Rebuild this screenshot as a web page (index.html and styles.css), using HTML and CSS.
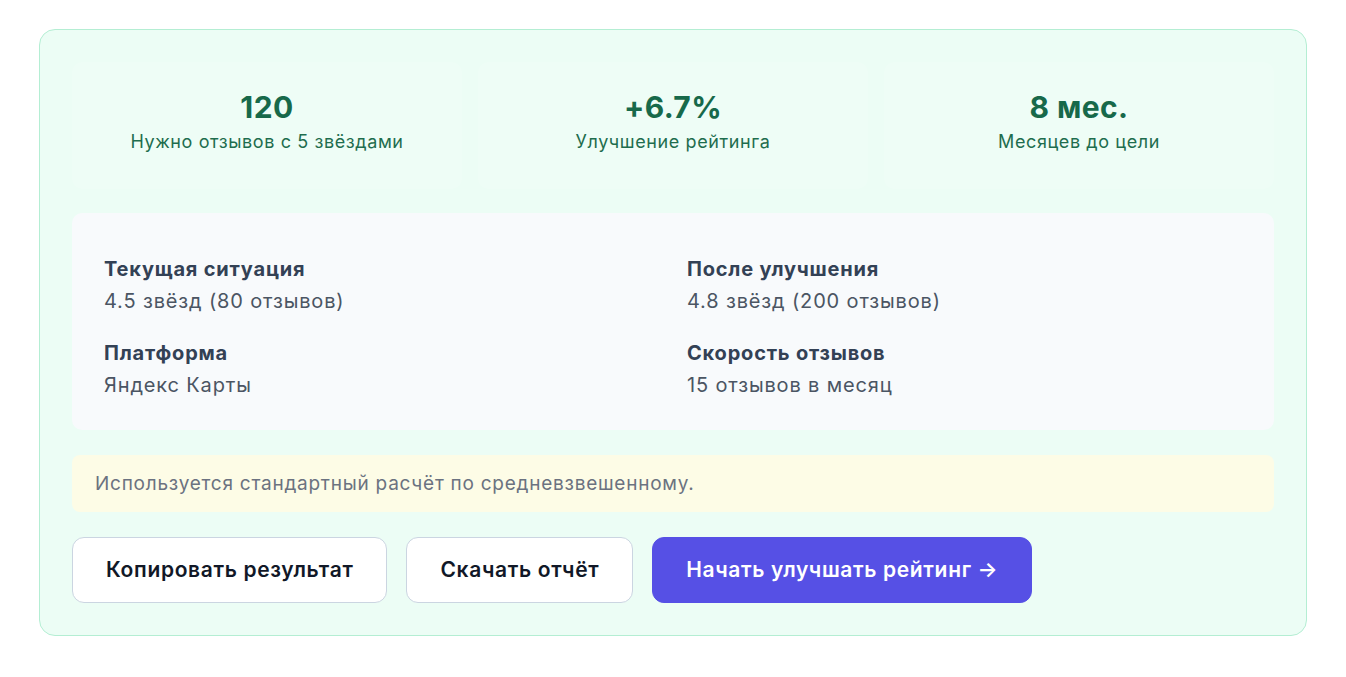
FILE: index.html
```html
<!DOCTYPE html>
<html lang="ru">
<head>
  <meta charset="UTF-8" />
  <meta name="viewport" content="width=device-width, initial-scale=1.0" />
  <title>Калькулятор рейтинга</title>
  <link rel="stylesheet" href="styles.css">
</head>
<body>

  <div class="page">
    <section class="result">
      <div class="stats">
        <div class="stat">
          <div class="stat-value">120</div>
          <div class="stat-label">Нужно отзывов с 5 звёздами</div>
        </div>
        <div class="stat">
          <div class="stat-value">+6.7%</div>
          <div class="stat-label">Улучшение рейтинга</div>
        </div>
        <div class="stat">
          <div class="stat-value">8 мес.</div>
          <div class="stat-label">Месяцев до цели</div>
        </div>
      </div>

      <div class="details">
        <div class="detail">
          <h4>Текущая ситуация</h4>
          <p>4.5 звёзд (80 отзывов)</p>
        </div>
        <div class="detail">
          <h4>После улучшения</h4>
          <p>4.8 звёзд (200 отзывов)</p>
        </div>
        <div class="detail">
          <h4>Платформа</h4>
          <p>Яндекс Карты</p>
        </div>
        <div class="detail">
          <h4>Скорость отзывов</h4>
          <p>15 отзывов в месяц</p>
        </div>
      </div>

      <div class="note">Используется стандартный расчёт по средневзвешенному.</div>

      <div class="actions">
        <button class="btn">Копировать результат</button>
        <button class="btn">Скачать отчёт</button>
        <button class="btn btn-primary">Начать улучшать рейтинг →</button>
      </div>
    </section>
  </div>

</body>
</html>
```

FILE: styles.css
```css
body { margin: 0; font-family: Inter, "Noto Sans", sans-serif; background: white; }
.page { padding: 29px 39px; }

.result {
  background: #ecfdf5;
  border: 1px solid #b4eed3;
  border-radius: 16px;
  padding: 32px;
}

.stats {
  display: grid;
  grid-template-columns: repeat(3, 1fr);
  gap: 16px;
  margin-bottom: 24px;
}
.stat {
  background: rgba(255, 255, 255, 0.12);
  border-radius: 10px;
  padding: 27px 16px 35px;
  text-align: center;
}
.stat-value {
  font-size: 30px;
  line-height: 36px;
  font-weight: 700;
  letter-spacing: 0.4px;
  color: #17694a;
}
.stat-label {
  margin-top: 5px;
  font-size: 18px;
  line-height: 24px;
  color: #1e6d4e;
  letter-spacing: 0.6px;
}

.details {
  background: #f8fafc;
  border-radius: 10px;
  padding: 42px 32px 31px;
  display: grid;
  grid-template-columns: 1fr 1fr;
  column-gap: 28px;
  row-gap: 24px;
}
.detail h4 {
  margin: 0;
  font-size: 20px;
  line-height: 28px;
  font-weight: 700;
  letter-spacing: 0.8px;
  color: #334155;
}
.detail p {
  margin: 4px 0 0;
  font-size: 20px;
  line-height: 28px;
  letter-spacing: 0.85px;
  color: #4b5563;
}

.note {
  margin-top: 25px;
  background: #fdfce6;
  border-radius: 8px;
  padding: 16px 23px;
  font-size: 19px;
  line-height: 25px;
  letter-spacing: 0.75px;
  color: #6b7280;
}

.actions {
  display: flex;
  gap: 19px;
  margin-top: 25px;
}
.btn {
  font-family: inherit;
  font-size: 21px;
  font-weight: 600;
  line-height: 24px;
  letter-spacing: 0.65px;
  padding: 20px 33px;
  height: 66px;
  border-radius: 12px;
  border: 1px solid #cbd5e1;
  background: white;
  color: #111827;
  cursor: pointer;
}
.btn-primary {
  background: #5650e5;
  border-color: #5650e5;
  color: white;
}
```
